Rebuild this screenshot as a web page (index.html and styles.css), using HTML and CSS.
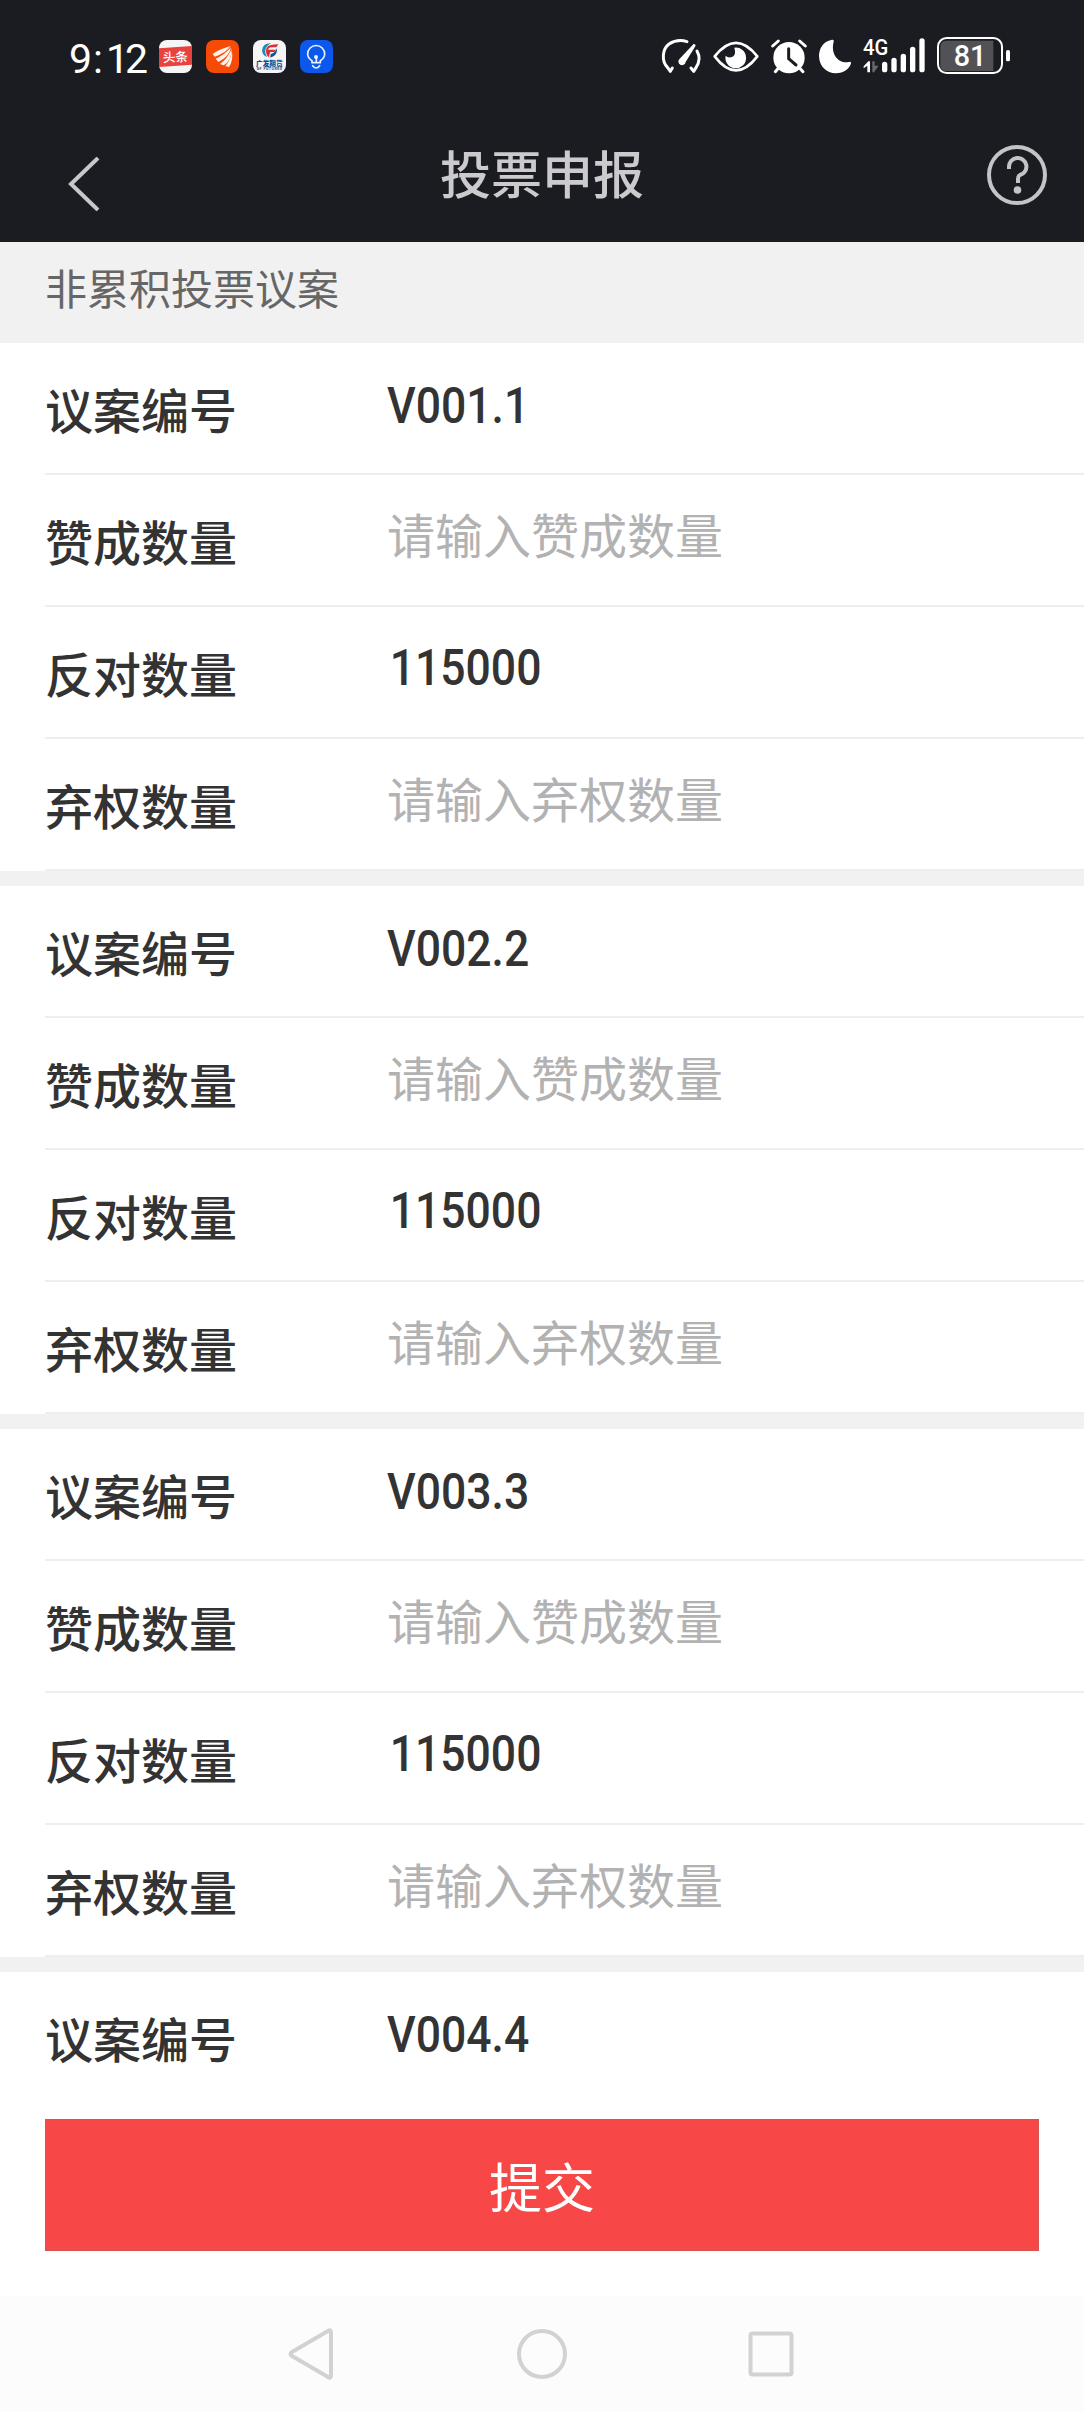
FILE: index.html
```html
<!DOCTYPE html>
<html lang="zh-CN">
<head>
    <meta charset="UTF-8">
    <meta name="viewport" content="width=device-width, initial-scale=1.0">
    <title>投票申报</title>
    <link rel="stylesheet" href="styles.css">
</head>
<body>
    <div class="screen">
        <div class="status-bar">
            <div class="time">9<span class="colon">:</span><span class="one">1</span>2</div>
            <div class="apps">
                <svg class="app" viewBox="0 0 99 99">
                    <rect width="99" height="99" rx="24" fill="#f5f5f5"/>
                    <path d="M0 25L99 18V74L0 81z" fill="#e8423f"/>
                    <text x="49" y="65" text-anchor="middle" font-size="38" font-weight="500" fill="#fff" transform="rotate(-3 49 50)">头条</text>
                </svg>
                <svg class="app" viewBox="0 0 99 99">
                    <rect width="99" height="99" rx="24" fill="#f64a07"/>
                    <path d="M20 42Q34 30 74 18Q60 39 26 50zM29 56Q54 46 75 22Q70 50 37 66zM42 72Q64 56 77 26Q77 61 53 76zM58 78Q73 62 78 34Q82 62 69 81z" fill="#fff1e8"/>
                </svg>
                <svg class="app" viewBox="0 0 99 99">
                    <rect width="99" height="99" rx="24" fill="#f5f5f5"/>
                    <path d="M55 10Q30 8 27 31Q28 46 42 51Q34 40 37 29Q41 15 55 10z" fill="#1c8bb9"/>
                    <path d="M43 20Q48 14 76 13L70 22H53Q47 23 45 29H69L64 36H52Q49 43 48 52Q39 46 39 33Q39 25 43 20z" fill="#d82e2e"/>
                    <path d="M72 24Q75 47 52 53L53 42Q67 39 72 24z" fill="#17518d"/>
                    <text x="49" y="78" text-anchor="middle" font-size="20" font-weight="900" fill="#144b8a">广发期货</text>
                    <text x="49" y="89" text-anchor="middle" font-size="11" font-weight="700" textLength="76" fill="#144b8a">GF FUTURES</text>
                </svg>
                <svg class="app" viewBox="0 0 99 99">
                    <rect width="99" height="99" rx="24" fill="#0c58ec"/>
                    <g fill="none" stroke="#e6f4ff" stroke-width="5" stroke-linecap="round" stroke-linejoin="round">
                        <path d="M36 68V62Q23 54 23 42A25 25 0 0 1 74 42Q74 54 61 62V68zM38 77Q48 91 59 77M49 64V52"/>
                    </g>
                    <circle cx="48" cy="51" r="6" fill="#e6f4ff"/>
                </svg>
            </div>
            <div class="indicators">
                <svg class="gauge" viewBox="60 48 135 117">
                    <path d="M91 154L97 144M91 154L83 143C64 124 66 88 87 72Q112 56 141 65M171 93Q185 118 168 143L161 154L153 144" fill="none" stroke="#fff" stroke-width="9" stroke-linecap="round" stroke-linejoin="round"/>
                    <path d="M163 72Q169 74 166 79L137 126A11 11 0 1 1 119 116L158 75Q160 71 163 72z" fill="#fff"/>
                </svg>
                <svg class="eye" viewBox="216 48 144 117">
                    <path d="M224 109Q288 28 352 109Q288 193 224 109z" fill="none" stroke="#fff" stroke-width="8" stroke-linejoin="round"/>
                    <path d="M283 83A31 31 0 1 1 257 107Q264 115 276 111Q290 104 283 83z" fill="#fff"/>
                </svg>
                <svg class="alarm" viewBox="390 48 114 117">
                    <circle cx="447" cy="113" r="47" fill="#fff"/>
                    <path d="M398 78L415 63M479 63L496 78M416 143L406 155M478 143L489 155" stroke="#fff" stroke-width="9" stroke-linecap="round"/>
                    <path d="M446 86V116L468 135" fill="none" stroke="#1b1c21" stroke-width="9" stroke-linecap="round" stroke-linejoin="round"/>
                </svg>
                <svg class="moon" viewBox="534 48 102 117">
                    <path d="M576 59C548 64 537 87 537 109C538 140 560 160 587 160C612 160 629 146 633 130Q634 124 627 126C596 132 571 103 581 65Q583 58 576 59z" fill="#fff"/>
                </svg>
                <svg class="signal" viewBox="666 48 192 117">
                    <text x="669" y="105" font-size="66" font-weight="500" textLength="76" lengthAdjust="spacingAndGlyphs" fill="#fff">4G</text>
                    <path d="M671 139L685 124H690V157H682V137L671 145z" fill="#fff"/>
                    <path d="M697 124H704V137H716L701 158L697 155z" fill="#68696d"/>
                    <path d="M734 133V149M762 121V149M790 109V149M818 88V149M846 63V149" stroke="#fff" stroke-width="16" stroke-linecap="round"/>
                </svg>
                <svg class="battery" viewBox="888 48 225 117">
                    <path d="M920 62H1060V153H920Q901 153 901 134V81Q901 62 920 62z" fill="#515156"/>
                    <rect x="894" y="54" width="192" height="105" rx="26" fill="none" stroke="#fff" stroke-width="6"/>
                    <rect x="1098" y="90" width="12" height="34" rx="5" fill="#fff"/>
                    <text x="941" y="139" font-size="90" font-weight="500" textLength="98" lengthAdjust="spacingAndGlyphs" fill="#fff">81</text>
                </svg>
            </div>
        </div>

        <div class="title-bar">
            <svg class="back" viewBox="0 0 32 54">
                <path d="M30 1L3 27L30 53" fill="none" stroke="#c8c8ca" stroke-width="4"/>
            </svg>
            <h1>投票申报</h1>
            <svg class="help" viewBox="0 0 60 60">
                <circle cx="30" cy="30" r="28" fill="none" stroke="#c4c4c8" stroke-width="4"/>
                <path d="M22 24V22A8.7 8.7 0 1 1 33 30Q31 31 31 34V38" fill="none" stroke="#c4c4c8" stroke-width="4"/>
                <circle cx="30.5" cy="45" r="3.8" fill="#c4c4c8"/>
            </svg>
        </div>

        <div class="section-title">非累积投票议案</div>

        <div class="list">
            <div class="group">
                <div class="row"><span class="label">议案编号</span><span class="value">V001.1</span></div>
                <div class="row"><span class="label">赞成数量</span><span class="placeholder">请输入赞成数量</span></div>
                <div class="row"><span class="label">反对数量</span><span class="value number">115000</span></div>
                <div class="row"><span class="label">弃权数量</span><span class="placeholder">请输入弃权数量</span></div>
            </div>
            <div class="group">
                <div class="row"><span class="label">议案编号</span><span class="value">V002.2</span></div>
                <div class="row"><span class="label">赞成数量</span><span class="placeholder">请输入赞成数量</span></div>
                <div class="row"><span class="label">反对数量</span><span class="value number">115000</span></div>
                <div class="row"><span class="label">弃权数量</span><span class="placeholder">请输入弃权数量</span></div>
            </div>
            <div class="group">
                <div class="row"><span class="label">议案编号</span><span class="value">V003.3</span></div>
                <div class="row"><span class="label">赞成数量</span><span class="placeholder">请输入赞成数量</span></div>
                <div class="row"><span class="label">反对数量</span><span class="value number">115000</span></div>
                <div class="row"><span class="label">弃权数量</span><span class="placeholder">请输入弃权数量</span></div>
            </div>
            <div class="group">
                <div class="row"><span class="label">议案编号</span><span class="value">V004.4</span></div>
            </div>
        </div>

        <div class="submit-bar">
            <button class="submit">提交</button>
        </div>

        <div class="nav-bar">
            <svg viewBox="0 0 50 52">
                <path d="M40 3Q43 1 43 5V47Q43 51 40 49L4 28Q1 26 4 24z" fill="none" stroke="#d2d2d2" stroke-width="4" stroke-linejoin="round"/>
            </svg>
            <svg viewBox="0 0 50 52">
                <circle cx="25" cy="26" r="23" fill="none" stroke="#d2d2d2" stroke-width="4"/>
            </svg>
            <svg viewBox="0 0 50 52">
                <rect x="4.5" y="5.5" width="41" height="41" rx="2" fill="none" stroke="#d2d2d2" stroke-width="4"/>
            </svg>
        </div>
    </div>
</body>
</html>
```
FILE: styles.css
```css
* {
    box-sizing: border-box;
}

body {
    margin: 0;
    font-family: Roboto, "Noto Sans CJK SC", sans-serif;
    background-color: #fff;
}

.screen {
    display: flex;
    flex-direction: column;
    width: 1084px;
    height: 2412px;
    overflow: hidden;
}

.status-bar {
    display: flex;
    flex-shrink: 0;
    height: 111px;
    padding: 0 73px 0 69px;
    background-color: #1b1c21;
}

.time {
    width: 90px;
    padding-top: 35px;
    font-size: 41px;
    line-height: 48px;
    color: #fff;
    white-space: nowrap;
}

.colon {
    margin: 0 3px 0 1px;
}

.one {
    margin-right: -4px;
}

.apps {
    display: flex;
    gap: 14px;
    padding-top: 40px;
}

.app {
    width: 33px;
    height: 33px;
}

.indicators {
    display: flex;
    gap: 10px;
    margin-left: auto;
    padding-top: 36px;
}

.indicators svg {
    height: 39px;
}

.gauge {
    width: 45px;
    margin-right: -3px;
}

.eye {
    width: 48px;
}

.alarm {
    width: 38px;
}

.moon {
    width: 34px;
}

.signal {
    width: 64px;
}

.battery {
    width: 75px;
}

.title-bar {
    display: flex;
    flex-shrink: 0;
    justify-content: space-between;
    height: 131px;
    padding: 0 37px 0 68px;
    background-color: #1b1c21;
}

.back {
    width: 32px;
    height: 54px;
    margin: 46px 28px 0 0;
}

.title-bar h1 {
    margin: 29px 31px 0 0;
    font-size: 51px;
    font-weight: 500;
    line-height: 74px;
    color: #cbcbcd;
}

.help {
    width: 60px;
    height: 60px;
    margin-top: 34px;
}

.section-title {
    flex-shrink: 0;
    height: 101px;
    padding-left: 45px;
    font-size: 42px;
    line-height: 98px;
    color: #666;
    background-color: #f1f1f1;
}

.list {
    flex: 1;
    min-height: 0;
    overflow: hidden;
}

.group {
    border-bottom: 15px solid #f1f1f1;
}

.row {
    display: flex;
    height: 132px;
    margin-left: 45px;
    border-bottom: 2px solid #eee;
    font-size: 48px;
}

.label {
    width: 342px;
    line-height: 139px;
    font-weight: 500;
    color: #333;
}

.value {
    font-size: 50px;
    font-weight: 500;
    line-height: 126px;
    color: #333;
    transform: scaleX(0.89);
    transform-origin: left;
}

.number {
    padding-left: 3px;
    line-height: 122px;
}

.placeholder {
    line-height: 126px;
    color: #b2b2b2;
}

.submit-bar {
    flex-shrink: 0;
    height: 222px;
    padding: 45px;
    background-color: #fff;
}

.submit {
    display: block;
    width: 100%;
    height: 132px;
    padding: 0;
    border: 1px solid #d45454;
    font-family: inherit;
    font-size: 53px;
    color: #fff;
    background-color: #f74747;
}

.nav-bar {
    display: flex;
    flex-shrink: 0;
    justify-content: center;
    gap: 179px;
    height: 116px;
    padding-top: 32px;
    background-color: #fcfcfc;
}

.nav-bar svg {
    width: 50px;
    height: 52px;
}
```
